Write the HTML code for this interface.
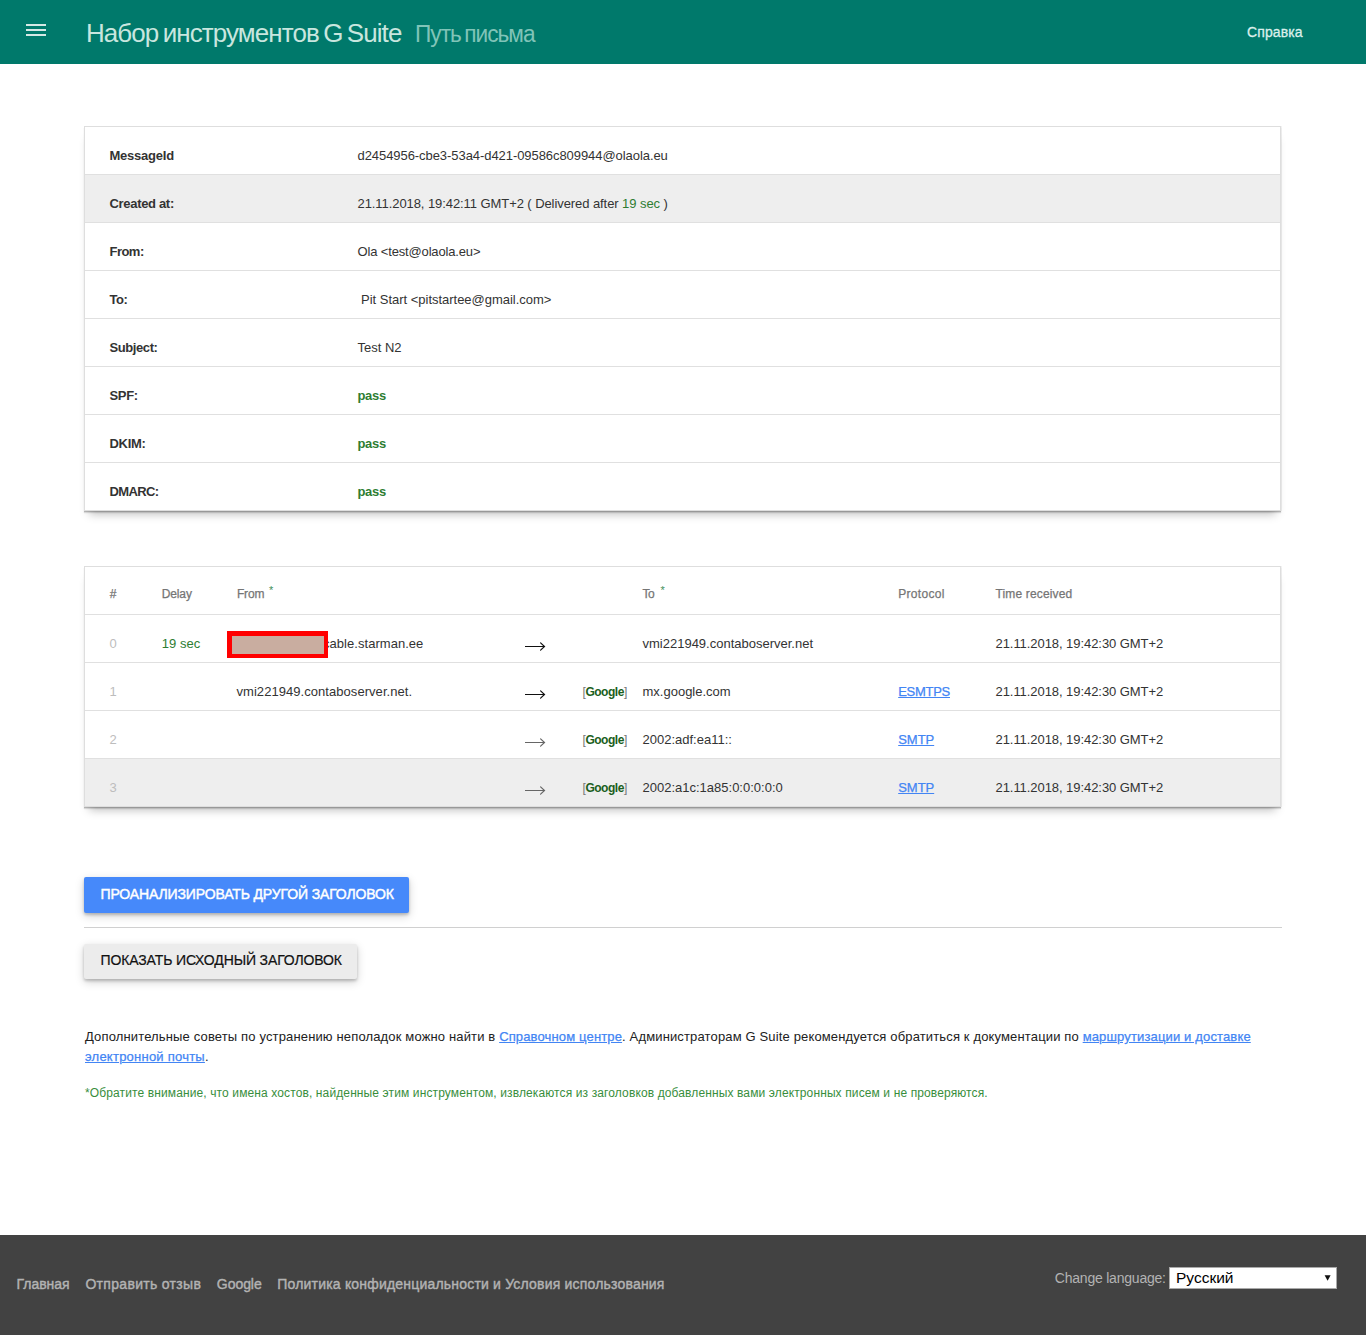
<!DOCTYPE html>
<html lang="ru">
<head>
<meta charset="utf-8">
<title>Путь письма</title>
<style>
*{box-sizing:border-box;margin:0;padding:0}
html,body{width:1366px;height:1335px;overflow:hidden;background:#fff}
body{position:relative;font-family:"Liberation Sans",sans-serif;color:#333}
.a{position:absolute;white-space:nowrap;line-height:1}
.r{position:absolute}
.b{font-weight:bold}
.lbl{font-weight:bold;color:#333}
.val{color:#333}
.th{color:#757575;-webkit-text-stroke:0.25px #757575}
.num{color:#bdbdbd}
.green{color:#2e7d32}
.gl{color:#1b5e20;font-weight:bold}
.br{color:#757575;font-weight:normal}
.link{color:#4285f4;text-decoration:underline;-webkit-text-stroke:0.25px #4285f4}
.fl{color:#b3b3b3;-webkit-text-stroke:0.4px #b3b3b3}
.ast{position:absolute;color:#3f8f5a;font-size:11px;line-height:1}
</style>
</head>
<body>
<div class="r" style="left:0px;top:0px;width:1366px;height:64px;background:#00796b;"></div>
<div class="r" style="left:26.4px;top:24px;width:19.2px;height:2px;background:#d5e9e5;"></div>
<div class="r" style="left:26.4px;top:29px;width:19.2px;height:2px;background:#d5e9e5;"></div>
<div class="r" style="left:26.4px;top:34px;width:19.2px;height:2px;background:#d5e9e5;"></div>
<div id="t1" class="a " style="left:86px;top:20.09px;font-size:26px;color:#c8e6df;letter-spacing:-0.9px;word-spacing:-2px;transform-origin:0 0;transform:scaleX(0.998)">Набор инструментов G Suite</div>
<div id="t2" class="a " style="left:415px;top:22.63px;font-size:23px;color:#80c4b8;letter-spacing:-1px;word-spacing:-2px;transform-origin:0 0;transform:scaleX(0.985)">Путь письма</div>
<div id="help" class="a " style="left:1247px;top:24.75px;font-size:14px;letter-spacing:0.097px;color:#dcefeb;-webkit-text-stroke:0.3px #dcefeb">Справка</div>
<div class="r" style="left:84px;top:126px;width:1197px;height:385px;background:#fff;border:1px solid #dedede;box-shadow:0 1px 0 rgba(0,0,0,.17),0 2px 1px rgba(0,0,0,.12),0 8px 9px -5px rgba(0,0,0,.26),1px 0 0 rgba(0,0,0,.05)"></div>
<div class="r" style="left:85px;top:175px;width:1195px;height:47px;background:#eeeeee;"></div>
<div class="r" style="left:85px;top:174px;width:1195px;height:1px;background:#e0e0e0;"></div>
<div class="r" style="left:85px;top:222px;width:1195px;height:1px;background:#e0e0e0;"></div>
<div class="r" style="left:85px;top:270px;width:1195px;height:1px;background:#e0e0e0;"></div>
<div class="r" style="left:85px;top:318px;width:1195px;height:1px;background:#e0e0e0;"></div>
<div class="r" style="left:85px;top:366px;width:1195px;height:1px;background:#e0e0e0;"></div>
<div class="r" style="left:85px;top:414px;width:1195px;height:1px;background:#e0e0e0;"></div>
<div class="r" style="left:85px;top:462px;width:1195px;height:1px;background:#e0e0e0;"></div>
<div id="l0" class="a lbl" style="left:109.5px;top:149.0px;font-size:13px;letter-spacing:-0.232px;">MessageId</div>
<div id="v0" class="a val" style="left:357.5px;top:149.0px;font-size:13px;letter-spacing:-0.063px;">d2454956-cbe3-53a4-d421-09586c809944@olaola.eu</div>
<div id="l1" class="a lbl" style="left:109.5px;top:197.0px;font-size:13px;letter-spacing:-0.320px;">Created at:</div>
<div id="v1" class="a val" style="left:357.5px;top:197.0px;font-size:13px;letter-spacing:-0.075px;">21.11.2018, 19:42:11 GMT+2 ( Delivered after <span class="green">19 sec</span> )</div>
<div id="l2" class="a lbl" style="left:109.5px;top:245.0px;font-size:13px;letter-spacing:-0.529px;">From:</div>
<div id="v2" class="a val" style="left:357.5px;top:245.0px;font-size:13px;letter-spacing:-0.153px;">Ola &lt;test@olaola.eu&gt;</div>
<div id="l3" class="a lbl" style="left:109.5px;top:293.0px;font-size:13px;letter-spacing:-0.417px;">To:</div>
<div id="v3" class="a val" style="left:357.5px;top:293.0px;font-size:13px;letter-spacing:-0.020px;">&nbsp;Pit Start &lt;pitstartee@gmail.com&gt;</div>
<div id="l4" class="a lbl" style="left:109.5px;top:341.0px;font-size:13px;letter-spacing:-0.412px;">Subject:</div>
<div id="v4" class="a val" style="left:357.5px;top:341.0px;font-size:13px;">Test N2</div>
<div id="l5" class="a lbl" style="left:109.5px;top:389.0px;font-size:13px;letter-spacing:-0.356px;">SPF:</div>
<div id="v5" class="a val" style="left:357.5px;top:389.0px;font-size:13px;letter-spacing:-0.335px;"><span class="green b">pass</span></div>
<div id="l6" class="a lbl" style="left:109.5px;top:437.0px;font-size:13px;letter-spacing:-0.309px;">DKIM:</div>
<div id="v6" class="a val" style="left:357.5px;top:437.0px;font-size:13px;letter-spacing:-0.335px;"><span class="green b">pass</span></div>
<div id="l7" class="a lbl" style="left:109.5px;top:485.0px;font-size:13px;letter-spacing:-0.636px;">DMARC:</div>
<div id="v7" class="a val" style="left:357.5px;top:485.0px;font-size:13px;letter-spacing:-0.335px;"><span class="green b">pass</span></div>
<div class="r" style="left:84px;top:566px;width:1197px;height:241px;background:#fff;border:1px solid #dedede;box-shadow:0 1px 0 rgba(0,0,0,.17),0 2px 1px rgba(0,0,0,.12),0 8px 9px -5px rgba(0,0,0,.26),1px 0 0 rgba(0,0,0,.05)"></div>
<div class="r" style="left:85px;top:759px;width:1195px;height:47px;background:#eeeeee;"></div>
<div class="r" style="left:85px;top:614px;width:1195px;height:1px;background:#e0e0e0;"></div>
<div class="r" style="left:85px;top:662px;width:1195px;height:1px;background:#e0e0e0;"></div>
<div class="r" style="left:85px;top:710px;width:1195px;height:1px;background:#e0e0e0;"></div>
<div class="r" style="left:85px;top:758px;width:1195px;height:1px;background:#e0e0e0;"></div>
<div id="h0" class="a th" style="left:109.8px;top:587.84px;font-size:12px;">#</div>
<div id="h1" class="a th" style="left:161.7px;top:587.84px;font-size:12px;letter-spacing:-0.117px;">Delay</div>
<div id="h2" class="a th" style="left:236.9px;top:587.84px;font-size:12px;letter-spacing:-0.150px;">From</div>
<div class="ast" style="left:269px;top:585px">*</div>
<div id="h3" class="a th" style="left:642.5px;top:587.84px;font-size:12px;letter-spacing:-0.500px;">To</div>
<div class="ast" style="left:660.5px;top:585px">*</div>
<div id="h4" class="a th" style="left:898.2px;top:587.84px;font-size:12px;letter-spacing:0.321px;">Protocol</div>
<div id="h5" class="a th" style="left:995.5px;top:587.84px;font-size:12px;letter-spacing:0.152px;">Time received</div>
<div id="e1" class="a num" style="left:109.5px;top:636.5px;font-size:13px;">0</div>
<div id="d0" class="a " style="left:161.7px;top:636.5px;font-size:13px;letter-spacing:0.048px;"><span class="green">19 sec</span></div>
<svg class="r" style="left:524px;top:641px" width="22" height="11" viewBox="0 0 22 11"><path d="M1 5.5H20" stroke="#111" stroke-width="1" fill="none"/><path d="M16.6 1.9L20.5 5.5L16.6 9.1" stroke="#111" stroke-width="1.2" fill="none" stroke-linecap="round"/></svg>
<div id="to0" class="a val" style="left:642.5px;top:636.5px;font-size:13px;">vmi221949.contaboserver.net</div>
<div id="tm0" class="a val" style="left:995.5px;top:636.5px;font-size:13px;letter-spacing:-0.060px;">21.11.2018, 19:42:30 GMT+2</div>
<div id="e2" class="a num" style="left:109.5px;top:684.5px;font-size:13px;">1</div>
<div id="f1" class="a val" style="left:236.5px;top:684.5px;font-size:13px;letter-spacing:0.051px;">vmi221949.contaboserver.net.</div>
<svg class="r" style="left:524px;top:689px" width="22" height="11" viewBox="0 0 22 11"><path d="M1 5.5H20" stroke="#111" stroke-width="1" fill="none"/><path d="M16.6 1.9L20.5 5.5L16.6 9.1" stroke="#111" stroke-width="1.2" fill="none" stroke-linecap="round"/></svg>
<div id="g1" class="a " style="left:582.5px;top:686.34px;font-size:12px;letter-spacing:-0.466px;"><span class="br">[</span><span class="gl">Google</span><span class="br">]</span></div>
<div id="to1" class="a val" style="left:642.5px;top:684.5px;font-size:13px;">mx.google.com</div>
<div id="p1" class="a " style="left:898.2px;top:684.5px;font-size:13px;letter-spacing:-0.278px;"><span class="link">ESMTPS</span></div>
<div id="tm1" class="a val" style="left:995.5px;top:684.5px;font-size:13px;letter-spacing:-0.060px;">21.11.2018, 19:42:30 GMT+2</div>
<div id="e3" class="a num" style="left:109.5px;top:732.5px;font-size:13px;">2</div>
<svg class="r" style="left:524px;top:737px" width="22" height="11" viewBox="0 0 22 11"><path d="M1 5.5H20" stroke="#666" stroke-width="1" fill="none"/><path d="M16.6 1.9L20.5 5.5L16.6 9.1" stroke="#666" stroke-width="1.2" fill="none" stroke-linecap="round"/></svg>
<div id="g2" class="a " style="left:582.5px;top:734.34px;font-size:12px;letter-spacing:-0.466px;"><span class="br">[</span><span class="gl">Google</span><span class="br">]</span></div>
<div id="to2" class="a val" style="left:642.5px;top:732.5px;font-size:13px;">2002:adf:ea11::</div>
<div id="p2" class="a " style="left:898.2px;top:732.5px;font-size:13px;letter-spacing:-0.031px;"><span class="link">SMTP</span></div>
<div id="tm2" class="a val" style="left:995.5px;top:732.5px;font-size:13px;letter-spacing:-0.060px;">21.11.2018, 19:42:30 GMT+2</div>
<div id="e4" class="a num" style="left:109.5px;top:780.5px;font-size:13px;">3</div>
<svg class="r" style="left:524px;top:785px" width="22" height="11" viewBox="0 0 22 11"><path d="M1 5.5H20" stroke="#666" stroke-width="1" fill="none"/><path d="M16.6 1.9L20.5 5.5L16.6 9.1" stroke="#666" stroke-width="1.2" fill="none" stroke-linecap="round"/></svg>
<div id="g3" class="a " style="left:582.5px;top:782.34px;font-size:12px;letter-spacing:-0.466px;"><span class="br">[</span><span class="gl">Google</span><span class="br">]</span></div>
<div id="to3" class="a val" style="left:642.5px;top:780.5px;font-size:13px;">2002:a1c:1a85:0:0:0:0:0</div>
<div id="p3" class="a " style="left:898.2px;top:780.5px;font-size:13px;letter-spacing:-0.031px;"><span class="link">SMTP</span></div>
<div id="tm3" class="a val" style="left:995.5px;top:780.5px;font-size:13px;letter-spacing:-0.060px;">21.11.2018, 19:42:30 GMT+2</div>
<div id="f0" class="a val" style="left:323px;top:636.5px;font-size:13px;letter-spacing:0.042px;">cable.starman.ee</div>
<div class="r" style="left:227px;top:631px;width:101px;height:27px;background:#c9ada0;border:5px solid #ff0000;border-right-width:4px;border-bottom-width:4px"></div>
<div class="r" style="left:84px;top:877px;width:325px;height:36px;background:#4689fa;border-radius:2px;box-shadow:0 2px 3px rgba(0,0,0,.2),0 3px 10px rgba(0,0,0,.18)"></div>
<div id="btn1t" class="a " style="left:100.5px;top:887.15px;font-size:14px;letter-spacing:-0.129px;color:#fff;-webkit-text-stroke:0.45px #fff">ПРОАНАЛИЗИРОВАТЬ ДРУГОЙ ЗАГОЛОВОК</div>
<div class="r" style="left:84px;top:927px;width:1198px;height:1px;background:#d0d0d0;"></div>
<div class="r" style="left:84px;top:944px;width:273px;height:35px;background:#ececec;border-radius:2px;box-shadow:0 2px 3px rgba(0,0,0,.2),0 3px 10px rgba(0,0,0,.18)"></div>
<div id="btn2t" class="a " style="left:100.5px;top:953.15px;font-size:14px;letter-spacing:-0.127px;color:#111;-webkit-text-stroke:0.2px #111">ПОКАЗАТЬ ИСХОДНЫЙ ЗАГОЛОВОК</div>
<div id="para1" class="a " style="left:85px;top:1030.0px;font-size:13px;letter-spacing:0.147px;color:#212121">Дополнительные советы по устранению неполадок можно найти в <span class="link">Справочном центре</span>. Администраторам G Suite рекомендуется обратиться к документации по <span class="link">маршрутизации и доставке</span></div>
<div id="para2" class="a " style="left:85px;top:1050.0px;font-size:13px;letter-spacing:0.235px;color:#212121"><span class="link">электронной почты</span>.</div>
<div id="note" class="a " style="left:85px;top:1086.54px;font-size:12px;letter-spacing:0.119px;color:#388e3c">*Обратите внимание, что имена хостов, найденные этим инструментом, извлекаются из заголовков добавленных вами электронных писем и не проверяются.</div>
<div class="r" style="left:0px;top:1235px;width:1366px;height:100px;background:#424242;"></div>
<div id="fl0" class="a fl" style="left:16.6px;top:1277.15px;font-size:14px;letter-spacing:-0.057px;">Главная</div>
<div id="fl1" class="a fl" style="left:85.4px;top:1277.15px;font-size:14px;letter-spacing:0.312px;">Отправить отзыв</div>
<div id="fl2" class="a fl" style="left:216.8px;top:1277.15px;font-size:14px;letter-spacing:-0.043px;">Google</div>
<div id="fl3" class="a fl" style="left:277.3px;top:1277.15px;font-size:14px;letter-spacing:0.192px;">Политика конфиденциальности и Условия использования</div>
<div id="cl" class="a " style="left:1054.8px;top:1271.15px;font-size:14px;letter-spacing:-0.215px;color:#b3b3b3">Change language:</div>
<div class="r" style="left:1169px;top:1267px;width:168px;height:22px;background:#fff;border:1px solid #a9a9a9"></div>
<div id="ru" class="a " style="left:1176px;top:1270.08px;font-size:15.5px;color:#000">Русский</div>
<svg class="r" style="left:1324px;top:1274px" width="8" height="8" viewBox="0 0 8 8"><path d="M0.6 1.2H6.6L3.6 6.8Z" fill="#111"/></svg>
</body>
</html>
